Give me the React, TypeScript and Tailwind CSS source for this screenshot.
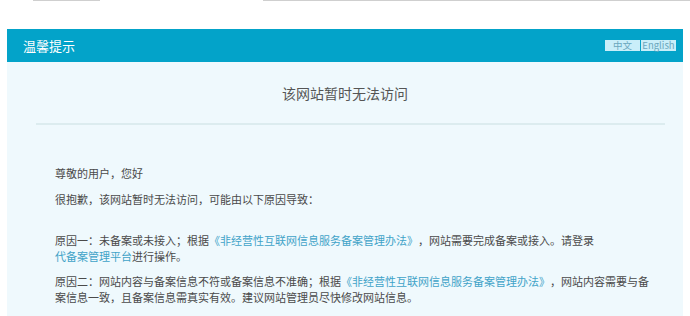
const link = "text-[#3fa3c8]";

export default function App() {
  return (
    <div
      className="h-[316px] w-[690px] overflow-hidden bg-white text-[#4a4a4a] [text-spacing-trim:space-all]"
      style={{ fontFamily: '"Noto Sans CJK SC", "Microsoft YaHei", sans-serif' }}
    >
      <div className="flex h-[29px]">
        <div className="ml-[33px] h-px w-[67px] bg-[#cfcfcf]" />
        <div className="ml-auto h-px w-[427px] bg-[#cfcfcf]" />
      </div>

      <div className="mx-[7px]">
        <div className="flex h-[33px] items-center justify-between bg-[#03a3c9] pl-[16px] pr-[7px]">
          <span className="text-[13px] text-white">温馨提示</span>
          <div className="flex h-[11px] text-[9.5px] leading-[11px]">
            <span className="w-[35px] bg-[#c9eef9] text-center text-[#6aa7bd]">中文</span>
            <span className="ml-px w-[35px] bg-[#c9eef9] text-center text-[#6aa7bd]">English</span>
          </div>
        </div>

        <div className="h-[260px] bg-[#eff9fd]">
          <h1 className="pt-[21px] text-center text-[14px] leading-[20px] text-[#555]">
            该网站暂时无法访问
          </h1>
          <div className="ml-[29px] mr-[18px] mt-[20px] h-[2px] bg-[#dcecef]" />

          <div className="pl-[48px] pt-[40px] text-[11px] leading-[16px]">
            <p>尊敬的用户，您好</p>
            <p className="mt-[10px]">很抱歉，该网站暂时无法访问，可能由以下原因导致：</p>
            <p className="mt-[25px]">
              原因一：未备案或未接入；根据
              <span className={link}>《非经营性互联网信息服务备案管理办法》</span>
              ，网站需要完成备案或接入。请登录
              <br />
              <span className={link}>代备案管理平台</span>进行操作。
            </p>
            <p className="mt-[9px]">
              原因二：网站内容与备案信息不符或备案信息不准确；根据
              <span className={link}>《非经营性互联网信息服务备案管理办法》</span>
              ，网站内容需要与备
              <br />
              案信息一致，且备案信息需真实有效。建议网站管理员尽快修改网站信息。
            </p>
          </div>
        </div>
      </div>
    </div>
  );
}
